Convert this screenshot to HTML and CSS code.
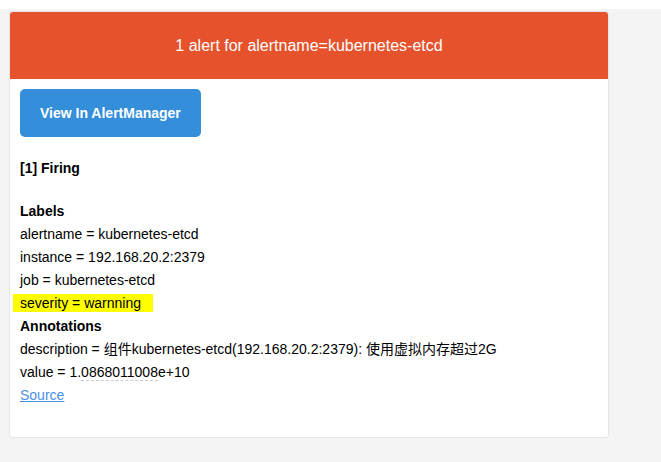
FILE: index.html
```html
<!DOCTYPE html>
<html>
<head>
<meta charset="utf-8">
<link rel="stylesheet" href="styles.css">
</head>
<body>
<div class="topbar"></div>
<div class="page">
  <div class="card">
    <div class="alert">1 alert for alertname=kubernetes-etcd</div>
    <div class="content">
      <div class="block"><a class="btn" href="#">View In AlertManager</a></div>
      <div class="block"><strong>[1] Firing</strong></div>
      <div class="block">
        <strong>Labels</strong><br>
        alertname = kubernetes-etcd<br>
        instance = 192.168.20.2:2379<br>
        job = kubernetes-etcd<br>
        <span class="hl">severity = warnning</span><br>
        <strong>Annotations</strong><br>
        description = 组件kubernetes-etcd(192.168.20.2:2379): 使用虚拟内存超过2G<br>
        value = 1.<span class="num">0868011008</span>e+10<br>
        <a class="link" href="#">Source</a><br>
      </div>
    </div>
  </div>
</div>
</body>
</html>
```
FILE: styles.css
```css
html, body {
  margin: 0;
  padding: 0;
}
body {
  background: #f4f4f4;
  font-family: "Liberation Sans", Arial, "Noto Sans CJK SC", sans-serif;
  font-size: 14px;
  color: #000;
}
.topbar {
  height: 9px;
  background: #fff;
}
.page {
  padding: 2px 0 0 9px;
}
.card {
  width: 598px;
  background: #fff;
  border: 1px solid #e6e6e6;
  border-radius: 3px;
}
.alert {
  background: #e6522c;
  color: #fff;
  font-size: 16px;
  line-height: 27px;
  padding: 20px;
  text-align: center;
  border-radius: 3px 3px 0 0;
}
.content {
  padding: 10px;
  line-height: 23px;
}
.block {
  padding-bottom: 20px;
}
.btn {
  display: inline-block;
  background: #348eda;
  color: #fff;
  font-weight: bold;
  text-decoration: none;
  line-height: 28px;
  padding: 10px 20px;
  border-radius: 5px;
}
.hl {
  background: #ffff00;
  padding: 1px 12px 1px 7px;
  margin-left: -7px;
}
.num {
  border-bottom: 1px dashed #cccccc;
}
.link {
  color: #4a90e2;
  text-decoration: underline;
}
```
